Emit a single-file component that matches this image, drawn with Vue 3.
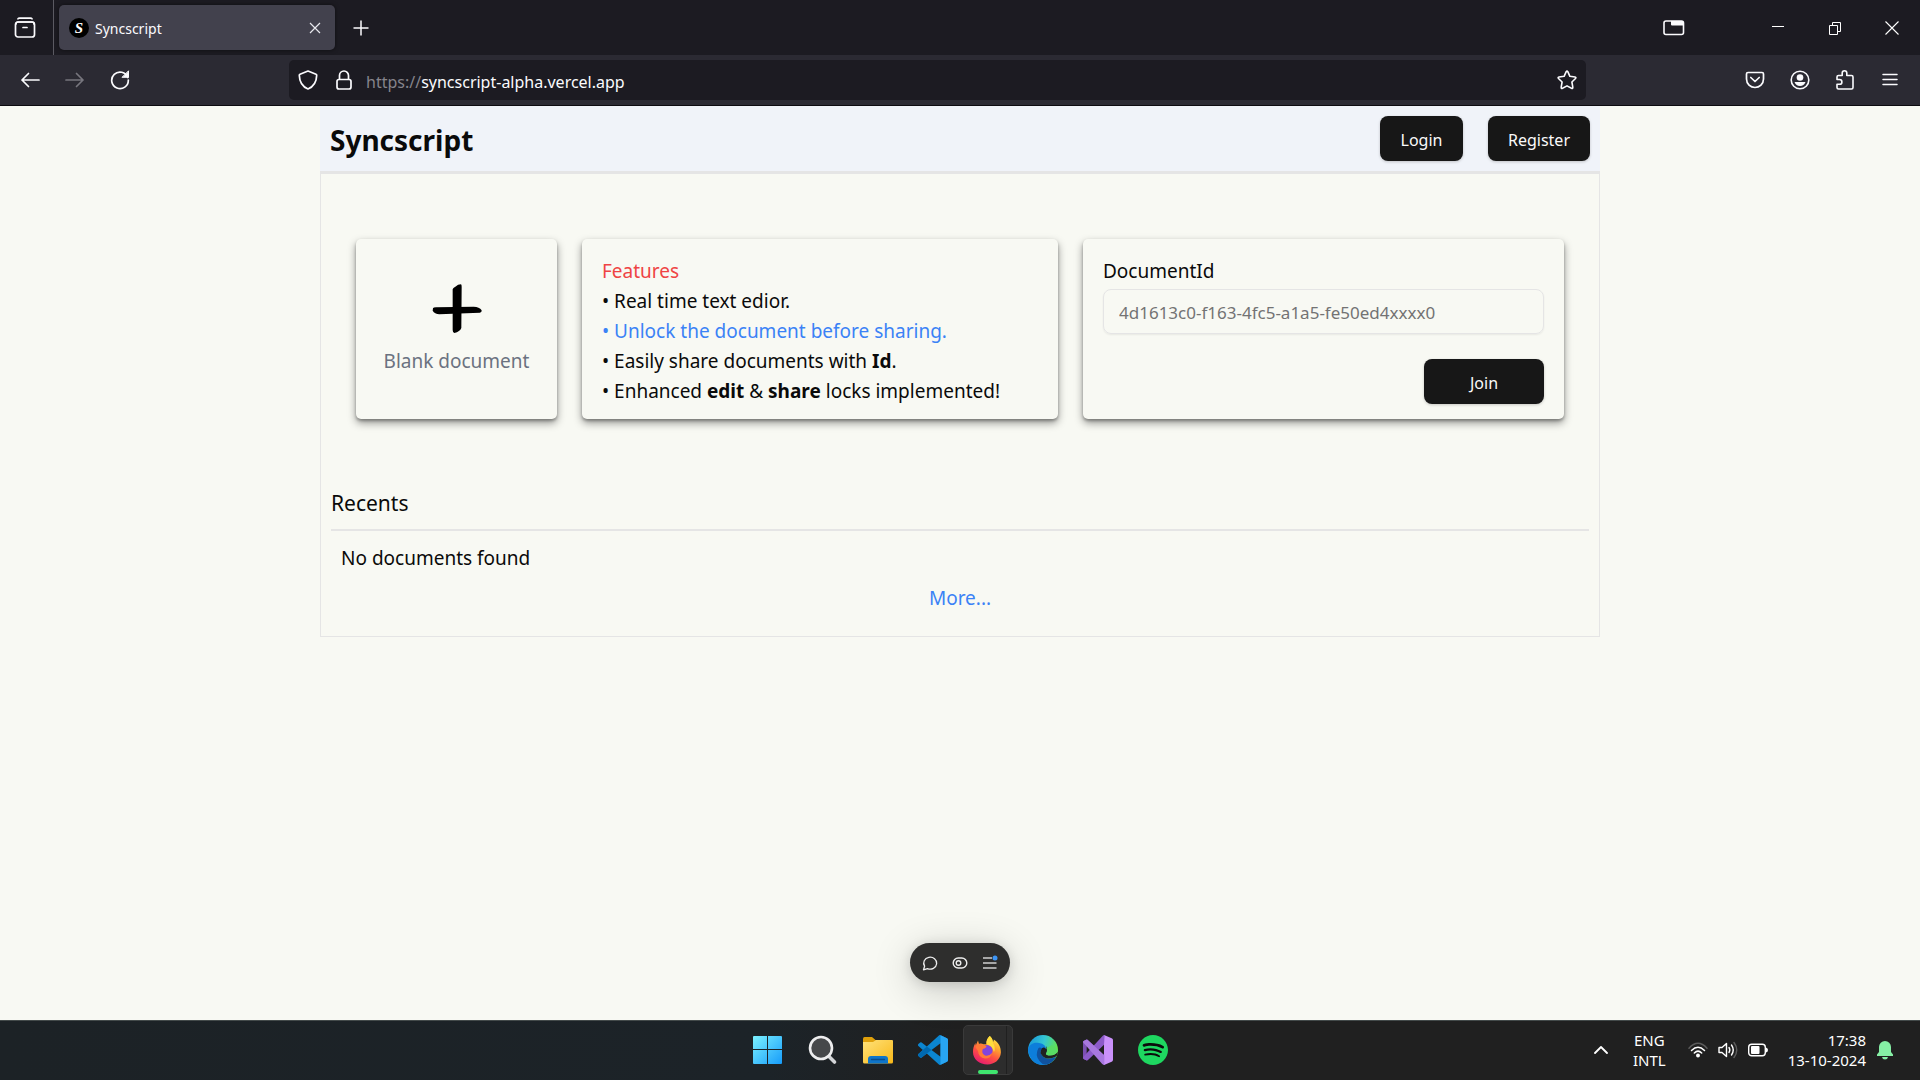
<script setup>
import { ref } from 'vue'

const documentId = ref('')
</script>

<template>
  <div class="screen">
    <div class="tabbar">
      <button class="view" aria-label="View recent browsing">
        <svg width="22" height="22" viewBox="0 0 22 22" fill="none" stroke="#fbfbfe" stroke-width="1.7" stroke-linecap="round"><path d="M4 1.8Q4.5 1.2 5.500 1.200H16.500Q17.500 1.200 18 1.800M9 10.500H13" /><rect x="1.500" y="5" width="19" height="15" rx="2.500" /><path d="M2 7Q2 5 4 5H18Q20 5 20 7" /></svg>
      </button>
      <div class="tab">
        <span class="favicon">S</span>
        <span class="tab-title">Syncscript</span>
        <button class="tab-close" aria-label="Close tab">
          <svg width="12" height="12" viewBox="0 0 12 12" stroke="#e8e8ee" stroke-width="1.200"><path d="M1 1L11 11M11 1L1 11" /></svg>
        </button>
      </div>
      <button class="new-tab" aria-label="New tab">
        <svg width="16" height="16" viewBox="0 0 16 16" stroke="#fbfbfe" stroke-width="1.500"><path d="M8 .5V15.500M.5 8H15.500" /></svg>
      </button>
      <button class="tab-list" aria-label="Picture window">
        <svg width="22" height="16" viewBox="0 0 22 16"><rect x="1" y="1" width="19.500" height="13.500" rx="2" fill="none" stroke="#fbfbfe" stroke-width="1.600" /><path d="M8 1H20V5.500H9Q8 5.500 8 4.500Z" fill="#fbfbfe" /></svg>
      </button>
      <div class="window-buttons">
        <button aria-label="Minimize"><svg width="14" height="14" viewBox="0 0 14 14" stroke="#fff"><path d="M1 5.500H13" /></svg></button>
        <button aria-label="Restore"><svg width="14" height="14" viewBox="0 0 14 14" fill="none" stroke="#fff"><path d="M1.500 4.500H9.500V13.500H1.500ZM4.500 4V1.500H12.500V10.500H10" /></svg></button>
        <button aria-label="Close"><svg width="14" height="14" viewBox="0 0 14 14" stroke="#fff" stroke-width="1.100"><path d="M.5 .5L13.500 13.500M13.500 .5L.5 13.500" /></svg></button>
      </div>
    </div>

    <div class="toolbar">
      <button aria-label="Back"><svg width="20" height="20" viewBox="0 0 20 20" fill="none" stroke="#fbfbfe" stroke-width="1.700" stroke-linecap="round" stroke-linejoin="round"><path d="M19 10H2M8.500 3.500L2 10L8.500 16.500" /></svg></button>
      <button aria-label="Forward"><svg width="20" height="20" viewBox="0 0 20 20" fill="none" stroke="#77767e" stroke-width="1.700" stroke-linecap="round" stroke-linejoin="round"><path d="M1 10H18M11.500 3.500L18 10L11.500 16.500" /></svg></button>
      <button aria-label="Reload"><svg width="20" height="20" viewBox="0 0 20 20" fill="none" stroke="#fbfbfe" stroke-width="1.700" stroke-linecap="round"><path d="M17.800 7.500A8.300 8.300 0 1 0 18.300 10" /><path d="M18.500 1.200V7.300H12.400Z" fill="#fbfbfe" stroke-width="1" stroke-linejoin="round" /></svg></button>
      <div class="urlbar">
        <button aria-label="Tracking protection"><svg width="20" height="20" viewBox="0 0 20 20" fill="none" stroke="#fbfbfe" stroke-width="1.700" stroke-linejoin="round"><path d="M10 1L18 4.200Q18.800 4.500 18.700 5.400C18.500 12 16 16.500 10 19C4 16.500 1.500 12 1.300 5.400Q1.200 4.500 2 4.200Z" /></svg></button>
        <button aria-label="Connection secure"><svg width="16" height="20" viewBox="0 0 16 20" fill="none" stroke="#fbfbfe" stroke-width="1.700"><rect x="1" y="9.500" width="14" height="9.500" rx="2" /><path d="M3.500 9.500V5.500A4.500 4.500 0 0 1 12.500 5.500V9.500" /></svg></button>
        <div class="url"><span>https://</span>syncscript-alpha.vercel.app</div>
        <button aria-label="Bookmark"><svg width="20" height="20" viewBox="0 0 20 20" fill="none" stroke="#fbfbfe" stroke-width="1.600" stroke-linejoin="round"><path d="M9.200 1.700Q10 .5 10.800 1.700L12.900 6.300L18 7Q19.500 7.400 18.500 8.500L14.900 12L15.800 17.200Q15.900 18.900 14.500 18.300L10 15.900L5.500 18.300Q4.100 18.900 4.200 17.200L5.100 12L1.500 8.500Q.5 7.400 2 7L7.100 6.300Z" /></svg></button>
      </div>
      <button aria-label="Save to Pocket"><svg width="20" height="18" viewBox="0 0 20 18" fill="none" stroke="#fbfbfe" stroke-width="1.700" stroke-linecap="round" stroke-linejoin="round"><path d="M3 1.500H17Q18.500 1.500 18.500 3V8C18.500 13 14.500 16.500 10 16.500S1.500 13 1.500 8V3Q1.500 1.500 3 1.500Z" /><path d="M5.800 6.500L10 10.500L14.200 6.500" /></svg></button>
      <button aria-label="Account"><svg width="20" height="20" viewBox="0 0 20 20"><circle cx="10" cy="10" r="8.800" fill="none" stroke="#fbfbfe" stroke-width="1.600" /><circle cx="10" cy="7.500" r="3.300" fill="#fbfbfe" /><path d="M4.500 12H15.500Q14 16 10 16T4.500 12Z" fill="#fbfbfe" /></svg></button>
      <button aria-label="Extensions"><svg width="20" height="22" viewBox="0 0 20 22" fill="none" stroke="#fbfbfe" stroke-width="1.600" stroke-linejoin="round"><path d="M7.200 6.500V4A2.300 2.300 0 0 1 11.800 4V6.500H16.500Q18 6.500 18 8V18.500Q18 20 16.500 20H3.500Q2 20 2 18.500V15.300H4.500A2.400 2.400 0 0 0 4.500 10.500H2V8Q2 6.500 3.500 6.500Z" /></svg></button>
      <button aria-label="Menu"><svg width="16" height="16" viewBox="0 0 16 16" stroke="#fbfbfe" stroke-width="1.500" stroke-linecap="round"><path d="M1 2.500H15M1 7.500H15M1 12.500H15" /></svg></button>
    </div>

    <main class="page">
      <div class="site">
        <header class="site-header">
          <h1>Syncscript</h1>
          <nav>
            <button class="primary">Login</button>
            <button class="primary">Register</button>
          </nav>
        </header>
        <div class="body">
          <div class="cards">
            <button class="card blank">
              <svg width="50" height="50" viewBox="0 0 150 150"><path d="M70 8Q78 1 87 1Q89 2 89 8L88 132Q84 143 67 147Q62 145 62 138L62 16Q63 11 70 8Z" /><path d="M3 73Q4 70 12 70L125 68Q142 68 149 79Q150 85 144 86L22 91Q8 90 2 80Z" /></svg>
              <span>Blank document</span>
            </button>
            <section class="card features">
              <h2>Features</h2>
              <p>• Real time text edior.</p>
              <p class="accent">• Unlock the document before sharing.</p>
              <p>• Easily share documents with <b>Id</b>.</p>
              <p>• Enhanced <b>edit</b> &amp; <b>share</b> locks implemented!</p>
            </section>
            <form class="card join" @submit.prevent>
              <label for="document-id">DocumentId</label>
              <input id="document-id" v-model="documentId" type="text" placeholder="4d1613c0-f163-4fc5-a1a5-fe50ed4xxxx0">
              <button class="primary" type="submit">Join</button>
            </form>
          </div>
          <section class="recents">
            <h2>Recents</h2>
            <p>No documents found</p>
            <a href="#">More...</a>
          </section>
        </div>
      </div>
      <div class="pill">
        <button aria-label="Comment"><svg width="16" height="16" viewBox="0 0 16 16" fill="none" stroke="#ededed" stroke-width="1.300" stroke-linejoin="round"><path d="M1.500 14.800L2.600 11.200A6.500 6 0 1 1 5.500 13.600Z" /></svg></button>
        <button aria-label="Draft mode"><svg width="16" height="16" viewBox="0 0 16 16" fill="none" stroke="#ededed" stroke-width="1.400"><rect x="1.200" y="3" width="13.600" height="10" rx="5" /><circle cx="6.500" cy="8" r="2.300" /></svg></button>
        <button aria-label="Toolbar menu"><svg width="16" height="16" viewBox="0 0 16 16" stroke="#cfcfcf" stroke-width="1.300"><path d="M1 3H10M1 8H14.500M1 13H14.500" /><circle cx="13" cy="3" r="2.500" fill="#3d95f5" stroke="none" /></svg></button>
      </div>
    </main>

    <footer class="taskbar">
      <div class="apps">
        <button aria-label="Start">
          <svg width="30" height="30" viewBox="0 0 30 30"><defs><linearGradient id="win" x1="0" y1="0" x2="30" y2="30" gradientUnits="userSpaceOnUse"><stop stop-color="#7df3ff" /><stop offset="1" stop-color="#1399fa" /></linearGradient></defs><path d="M1 1H14V14H0V2Q0 1 1 1ZM15 1H28Q29 1 29 2V14H15ZM0 15H14V29H1Q0 29 0 28ZM15 15H29V28Q29 29 28 29H15Z" fill="url(#win)" /></svg>
        </button>
        <button aria-label="Search">
          <svg width="30" height="30" viewBox="0 0 30 30"><path d="M20.500 21L26.500 27" stroke="#d3d5d8" stroke-width="3.600" stroke-linecap="round" /><circle cx="13" cy="13" r="11" fill="#46484a" stroke="#ededee" stroke-width="2.600" /></svg>
        </button>
        <button aria-label="File Explorer">
          <svg width="30" height="30" viewBox="0 0 30 30"><defs><linearGradient id="fold" x1="0" y1="0" x2="1" y2="1"><stop stop-color="#ffe27a" /><stop offset="1" stop-color="#f8b818" /></linearGradient></defs><path d="M0 4Q0 2 1.500 2H9L12.500 5H18V10H0Z" fill="#dfa00b" /><path d="M0 7H10L13 5H29Q30 5 30 6V27Q30 28.500 28.500 28.500H1.500Q0 28.500 0 27Z" fill="url(#fold)" /><path d="M5 28.500V24Q5 21 8 21H22Q25 21 25 24V28.500Z" fill="#0f75c9" /><path d="M8.500 24.500H21.500" stroke="#0a4d8c" stroke-width="1.300" stroke-linecap="round" /></svg>
        </button>
        <button aria-label="Visual Studio Code">
          <svg width="30" height="30" viewBox="0 0 24 24"><path fill="#0b85d0" d="M23.150 2.587L18.210.210a1.494 1.494 0 0 0-1.705.290l-9.460 8.630-4.120-3.128a.999.999 0 0 0-1.276.057L.327 7.261A1 1 0 0 0 .326 8.740L3.899 12 .326 15.260a1 1 0 0 0 .001 1.479L1.650 17.940a.999.999 0 0 0 1.276.057l4.120-3.128 9.460 8.630a1.492 1.492 0 0 0 1.704.290l4.942-2.377A1.500 1.500 0 0 0 24 20.060V3.939a1.500 1.500 0 0 0-.850-1.352zm-5.146 14.861L10.826 12l7.178-5.448v10.896z" /><path d="M.33 15.260L3.900 12L7.050 9.130L10.830 12L2.920 18Q2.200 18.400 1.650 17.940L.33 16.740Q-.3 16 .33 15.260Z" fill="#0069b0" /><path d="M18 .15L23.150 2.590Q24 3 24 3.940V20.060Q24 21 23.150 21.410L18 23.850Z" fill="#28a5f3" /></svg>
        </button>
        <button class="active" aria-label="Firefox">
          <svg width="30" height="30" viewBox="0 0 30 30"><defs><linearGradient id="fox" x1=".8" y1="0" x2=".3" y2="1"><stop stop-color="#fff247" /><stop offset=".35" stop-color="#ffa52e" /><stop offset=".65" stop-color="#ff4f43" /><stop offset="1" stop-color="#e51b72" /></linearGradient></defs><path d="M17.800 1C19.500 2.500 20.700 4.800 20.900 7C21.600 6.500 21.800 5.300 21.800 4.600C26.500 7.500 29 12 28.900 17.500C28.500 24.500 22.500 29.500 15.500 29.500C7.500 29.500 1 24.500 1 17C.9 13.500 1.800 10.500 3.500 8L3.700 10.500L6 5.500L7 9C8.500 8.200 10 8.500 11.500 9.200L14.500 9.200C14 5.800 15.500 3 17.800 1Z" fill="url(#fox)" /><circle cx="15" cy="15.500" r="5.600" fill="#8144dd" /><path d="M3.500 12Q6 7.500 10.500 9.500L14.500 11.200Q14.500 13 10.800 14Q9 18.500 13 20.500Q17 21.500 20 18Q19 23.500 13 23.500Q6.500 22.500 6 16Z" fill="#ff7a38" /><path d="M17.800 1Q21 3.500 20.900 8Q24 12 22 17Q20.500 10.500 14.500 9.200Q14 4.300 17.800 1Z" fill="#ffdd3d" /></svg>
        </button>
        <button aria-label="Edge">
          <svg width="30" height="30" viewBox="0 0 30 30"><defs><linearGradient id="edge" x1="0" y1="0" x2="1" y2=".3"><stop stop-color="#1593dc" /><stop offset=".55" stop-color="#35c6d3" /><stop offset="1" stop-color="#63e34f" /></linearGradient></defs><circle cx="15" cy="15" r="15" fill="url(#edge)" /><path d="M0 15C1 9 6 7 11 8Q18 9 18.500 15C15 12 11.500 15 12 19C12.500 24 20 25.500 28 21.500Q23.500 30 15 30Q2.500 29.500 0 15Z" fill="#0d7edb" /><path d="M10.500 13Q6.500 20 11.500 26Q14 29.500 17.500 29.800Q24.500 28.500 28 22Q20 25.500 15.500 22Q11 18 14 13.500Q12 12 10.500 13Z" fill="#10529f" /><path d="M18 11Q20 15.500 18 18.500Q18 20.500 22 20.500Q27.500 20.500 29.700 16.800Q30 20.200 28 21.600Q20.500 25.200 15.500 22Q10.500 17.500 14 13.200Q16 11.500 18 14Z" fill="#202020" /><path d="M18 18.500Q17.500 20.300 22 20.300Q28.500 20 29.900 15.500L24 10L18.500 13Q20 16 18 18.500Z" fill="#59dc65" /></svg>
        </button>
        <button aria-label="Visual Studio">
          <svg width="30" height="30" viewBox="0 0 90 90"><path d="M0 22Q0 19 3 17L10 14Q13 13 15 16L65 62V90L15 30L11 35V60L15 64L15 74Q13 77 10 76L3 73Q0 71 0 68Z" fill="#7c50b3" /><path d="M63 0L86 10Q90 12 90 16V74Q90 78 86 80L63 90Z" fill="#ca91fa" /><path d="M63 29L19 71Q14 77 10 76L3 73Q0 71 0 67L58 4Q61 0 65 0Z" fill="#8c5bc9" /><path d="M9 14Q13 13 17 17L64 61V90Q61 90 57 86L0 22V20Q0 18 3 17Z" fill="#a878df" /></svg>
        </button>
        <button aria-label="Spotify">
          <svg width="30" height="30" viewBox="0 0 24 24"><circle cx="12" cy="12" r="11" fill="#0b0b0b" /><path fill="#1ed760" d="M12 0C5.400 0 0 5.400 0 12s5.400 12 12 12 12-5.400 12-12S18.660 0 12 0zm5.521 17.340c-.240.359-.660.480-1.021.240-2.820-1.740-6.360-2.101-10.561-1.141-.418.122-.779-.179-.899-.539-.120-.421.180-.780.540-.900 4.560-1.021 8.520-.600 11.640 1.320.420.180.479.659.301 1.020zm1.440-3.300c-.301.420-.841.600-1.262.300-3.239-1.980-8.159-2.580-11.939-1.380-.479.120-1.020-.120-1.140-.600-.120-.480.120-1.021.600-1.141C9.600 9.900 15 10.561 18.720 12.840c.361.181.540.780.241 1.200zm.120-3.360C15.240 8.400 8.820 8.160 5.160 9.301c-.600.179-1.200-.181-1.380-.721-.180-.601.180-1.200.720-1.381 4.260-1.260 11.280-1.020 15.721 1.621.539.300.719 1.020.419 1.560-.299.421-1.020.599-1.559.300z" /></svg>
        </button>
      </div>
      <div class="tray">
        <svg class="chevron" width="14" height="14" viewBox="0 0 14 14" fill="none" stroke="#fff" stroke-width="1.800" stroke-linecap="round" stroke-linejoin="round"><path d="M1 10L7 4L13 10" /></svg>
        <div class="lang">ENG<br>INTL</div>
        <svg class="status" width="20" height="20" viewBox="0 0 20 20" fill="none" stroke="#fff" stroke-width="1.500" stroke-linecap="round"><path d="M1 8.200Q10 -1.500 19 8.200" stroke="#5c5c5c" /><path d="M3.500 10.500Q10 4 16.500 10.500M6.300 13Q10 9.300 13.700 13" /><circle cx="10" cy="15.500" r="1.200" fill="#fff" /></svg>
        <svg class="status" width="20" height="20" viewBox="0 0 20 20" fill="none" stroke="#fff" stroke-width="1.400" stroke-linecap="round" stroke-linejoin="round"><path d="M1 7.500H4L8.500 3.500V16.500L4 12.500H1ZM11 7.500Q12.700 10 11 12.500M13.500 5Q17 10 13.500 15" /><path d="M16 2.500Q21.500 10 16 17.500" stroke="#5c5c5c" /></svg>
        <svg class="status" width="20" height="20" viewBox="0 0 20 20"><rect x=".7" y="4.200" width="16.600" height="11.600" rx="3" fill="none" stroke="#fff" stroke-width="1.400" /><rect x="3" y="6" width="8.500" height="8" rx="1" fill="#fff" /><path d="M18 7.500Q20 8 20 10T18 12.500Z" fill="#fff" /></svg>
        <div class="clock">17:38<br>13-10-2024</div>
        <svg width="16" height="20" viewBox="0 0 16 20" fill="#86efa5"><path d="M2 7A6 6 0 0 1 14 7V12L16 14.500V16H0V14.500L2 12ZM5 17H11Q10.500 19.500 8 19.500T5 17Z" /></svg>
      </div>
    </footer>
  </div>
</template>

<style>
body {
  margin: 0;
}
</style>

<style scoped>
.screen {
  display: flex;
  flex-direction: column;
  min-height: 100vh;
  color: #0a0a0a;
  background: #f8f9f3;
  font: 19px/30px "Noto Sans", "Open Sans", sans-serif;
}
.screen * {
  box-sizing: border-box;
}
h1,
h2,
p {
  margin: 0;
  font-size: inherit;
  font-weight: 400;
}
button {
  display: flex;
  align-items: center;
  justify-content: center;
  padding: 0;
  border: 0;
  background: none;
  color: inherit;
  font: inherit;
}
svg {
  flex: none;
}
.tabbar {
  display: flex;
  align-items: center;
  height: 55px;
  background: #1c1b22;
}
.view {
  width: 54px;
  height: 55px;
  padding-right: 4px;
  border-right: 1px solid #5b5a62;
}
.tab {
  display: flex;
  align-items: center;
  width: 276px;
  height: 45px;
  margin-left: 5px;
  padding: 0 14px 0 10px;
  border-radius: 5px;
  background: #42414d;
  box-shadow: 0 0 4px #0008;
  color: #fbfbfe;
  font-size: 14px;
}
.favicon {
  width: 20px;
  height: 20px;
  border-radius: 50%;
  background: #000;
  color: #fff;
  font: italic bold 15px/20px "Liberation Serif", serif;
  text-align: center;
}
.tab-title {
  flex: 1;
  padding: 2px 0 0 6px;
}
.new-tab {
  width: 52px;
  height: 45px;
}
.tab-list {
  margin-left: auto;
  width: 60px;
  height: 55px;
}
.window-buttons {
  display: flex;
  margin-left: 45px;
}
.window-buttons button {
  width: 57px;
  height: 55px;
}
.toolbar {
  display: flex;
  align-items: center;
  height: 51px;
  padding: 0 8px 0 7px;
  border-bottom: 1px solid #0c0b10;
  background: #2b2a33;
}
.toolbar button {
  width: 45px;
  height: 40px;
}
.urlbar {
  display: flex;
  flex: 1;
  align-items: center;
  height: 40px;
  margin: 0 146px 0 147px;
  border-radius: 5px;
  background: #1c1b22;
}
.toolbar .urlbar button {
  width: 38px;
}
.toolbar .urlbar button:nth-child(2) {
  width: 34px;
}
.url {
  flex: 1;
  padding: 4px 0 0 5px;
  color: #fbfbfe;
  font-size: 16px;
}
.url span {
  color: #85848b;
}
.page {
  position: relative;
  flex: 1;
}
.site {
  width: 100%;
  max-width: 1280px;
  margin: 0 auto;
}
.site-header {
  display: flex;
  align-items: center;
  justify-content: space-between;
  padding: 10px;
  border-bottom: 3px solid #e5e5e5;
  background: #f0f3f9;
}
.site-header h1 {
  padding-top: 2px;
  font-size: 28px;
  font-weight: 700;
  line-height: 40px;
}
nav {
  display: flex;
  gap: 25px;
}
.primary {
  height: 45px;
  min-width: 83px;
  padding: 2px 20px 0;
  border-radius: 8px;
  background: #171717;
  box-shadow: 0 1px 3px #0003;
  color: #fafafa;
  font-size: 16px;
}
.body {
  border: 1px solid #e5e5e5;
  border-top: 0;
}
.cards {
  display: grid;
  grid-template-columns: 201fr 476fr 481fr;
  gap: 25px;
  padding: 65px 35px;
}
.card {
  min-height: 180px;
  padding: 17px 20px 13px;
  border-radius: 5px;
  box-shadow: 0 4px 8px #0006, 0 2px 3px #0004;
}
.blank {
  flex-direction: column;
  gap: 12px;
  padding: 16px 0 14px;
  color: #6b7280;
}
.blank svg {
  fill: #000;
}
.features h2 {
  color: #ef4444;
}
.accent {
  color: #3b82f6;
}
.join {
  display: flex;
  flex-direction: column;
}
.join input {
  height: 45px;
  margin: 3px 0 25px;
  padding: 2px 15px 0;
  border: 1px solid #e5e5e5;
  border-radius: 8px;
  background: transparent;
  box-shadow: 0 1px 2px #0001;
  font: inherit;
  font-size: 17px;
}
.join input::placeholder {
  color: #737373;
  opacity: 1;
}
.join .primary {
  width: 120px;
  align-self: flex-end;
}
.recents {
  padding: 0 10px 23px;
}
.recents h2 {
  padding: 4px 0 11px;
  border-bottom: 2px solid #e5e5e5;
  font-size: 21px;
}
.recents p {
  padding: 12px 10px 10px;
}
.recents a {
  display: block;
  width: fit-content;
  margin: 0 auto;
  color: #3b82f6;
  text-decoration: none;
}
.pill {
  position: absolute;
  bottom: 38px;
  left: 50%;
  display: flex;
  align-items: center;
  justify-content: center;
  width: 100px;
  height: 39px;
  border-radius: 20px;
  background: #2e2e2d;
  box-shadow: 0 8px 40px #0003, 0 2px 12px #0002;
  transform: translateX(-50%);
}
.pill button {
  width: 30px;
  height: 30px;
}
.taskbar {
  display: grid;
  grid-template-columns: 1fr auto 1fr;
  align-items: center;
  height: 60px;
  padding-bottom: 1px;
  border-top: 1px solid #434a4a;
  background: linear-gradient(90deg, #1c2226, #1c2328 40%, #202020 50%);
}
.apps {
  display: flex;
  grid-column: 2;
}
.apps button {
  width: 55px;
  height: 50px;
}
.apps .active {
  position: relative;
  border: 1px solid #3a3a3a;
  border-radius: 5px;
  background: #2d2d2d;
  width: 50px;
  margin: 0 2px 0 3px;
  padding-right: 2px;
}
.apps .active::before {
  position: absolute;
  top: 0;
  right: 5px;
  bottom: 0;
  width: 1px;
  background: #202020;
  content: "";
}
.apps .active::after {
  position: absolute;
  bottom: 0;
  left: 14px;
  width: 20px;
  height: 4px;
  border-radius: 2px;
  background: #3fe56e;
  content: "";
}
.tray {
  display: flex;
  align-items: center;
  justify-content: flex-end;
  padding-right: 27px;
  color: #fff;
  font-size: 15px;
  line-height: 20px;
}
.chevron {
  margin-right: 25px;
}
.lang {
  margin-right: 22px;
  text-align: center;
}
.status {
  margin-right: 10px;
}
.clock {
  margin: 0 11px 0 10px;
  text-align: right;
}
</style>
